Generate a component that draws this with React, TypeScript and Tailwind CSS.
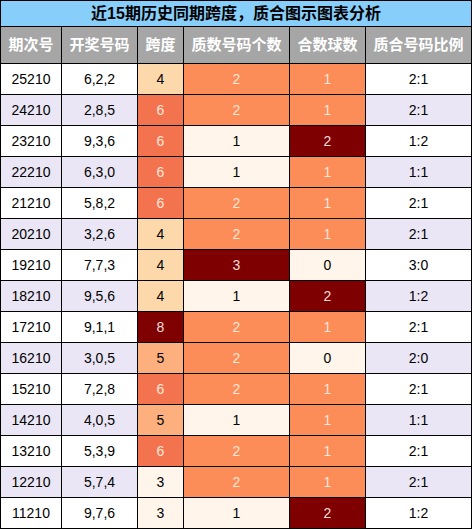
import React from "react";

const rows = [
    ["25210", "6,2,2", 4, 2, 1, "2:1"],
    ["24210", "2,8,5", 6, 2, 1, "2:1"],
    ["23210", "9,3,6", 6, 1, 2, "1:2"],
    ["22210", "6,3,0", 6, 1, 1, "1:1"],
    ["21210", "5,8,2", 6, 2, 1, "2:1"],
    ["20210", "3,2,6", 4, 2, 1, "2:1"],
    ["19210", "7,7,3", 4, 3, 0, "3:0"],
    ["18210", "9,5,6", 4, 1, 2, "1:2"],
    ["17210", "9,1,1", 8, 2, 1, "2:1"],
    ["16210", "3,0,5", 5, 2, 0, "2:0"],
    ["15210", "7,2,8", 6, 2, 1, "2:1"],
    ["14210", "4,0,5", 5, 1, 1, "1:1"],
    ["13210", "5,3,9", 6, 2, 1, "2:1"],
    ["12210", "5,7,4", 3, 2, 1, "2:1"],
    ["11210", "9,7,6", 3, 1, 2, "1:2"],
] as const;

// heat colours, light -> dark
const spanColor: Record<number, string> = {
    3: "bg-[#fff5eb] text-black",
    4: "bg-[#fdd8ab] text-black",
    5: "bg-[#fdb07d] text-black",
    6: "bg-[#f4734f] text-[#fde8dc]",
    8: "bg-[#7f0000] text-[#f5dede]",
};
const primeColor: Record<number, string> = {
    1: "bg-[#fff5eb] text-black",
    2: "bg-[#fc8d59] text-[#fee6d8]",
    3: "bg-[#7f0000] text-[#f5dede]",
};
const compColor: Record<number, string> = {
    0: "bg-[#fff5eb] text-black",
    1: "bg-[#fc8d59] text-[#fee6d8]",
    2: "bg-[#7f0000] text-[#f5dede]",
};

const headers = ["期次号", "开奖号码", "跨度", "质数号码个数", "合数球数", "质合号码比例"];

const cell = "flex items-center justify-center h-[30px] text-[14px]";

export default function App() {
    return (
        <div
            className="w-[472px] h-[529px] bg-white"
            style={{fontFamily: '"Liberation Sans", "Noto Sans CJK SC", sans-serif'}}
        >
            <div className="grid grid-cols-[60px_75px_45px_105px_75px_105px] gap-px p-px bg-black">
                <div className="col-span-6 h-[25px] bg-[#87cefa] flex items-center justify-center text-[16px] font-bold text-black">
                    近15期历史同期跨度，质合图示图表分析
                </div>
                {headers.map((h) => (
                    <div
                        key={h}
                        className="h-[36px] bg-[#a6a6a6] flex items-center justify-center text-[15px] font-bold text-white"
                    >
                        {h}
                    </div>
                ))}
                {rows.map((r, i) => {
                    const stripe = i % 2 === 1 ? "bg-[#ebe6f5]" : "bg-white";
                    return (
                        <React.Fragment key={r[0]}>
                            <div className={`${cell} ${stripe} text-black`}>{r[0]}</div>
                            <div className={`${cell} ${stripe} text-black`}>{r[1]}</div>
                            <div className={`${cell} ${spanColor[r[2]]}`}>{r[2]}</div>
                            <div className={`${cell} ${primeColor[r[3]]}`}>{r[3]}</div>
                            <div className={`${cell} ${compColor[r[4]]}`}>{r[4]}</div>
                            <div className={`${cell} ${stripe} text-black`}>{r[5]}</div>
                        </React.Fragment>
                    );
                })}
            </div>
        </div>
    );
}
